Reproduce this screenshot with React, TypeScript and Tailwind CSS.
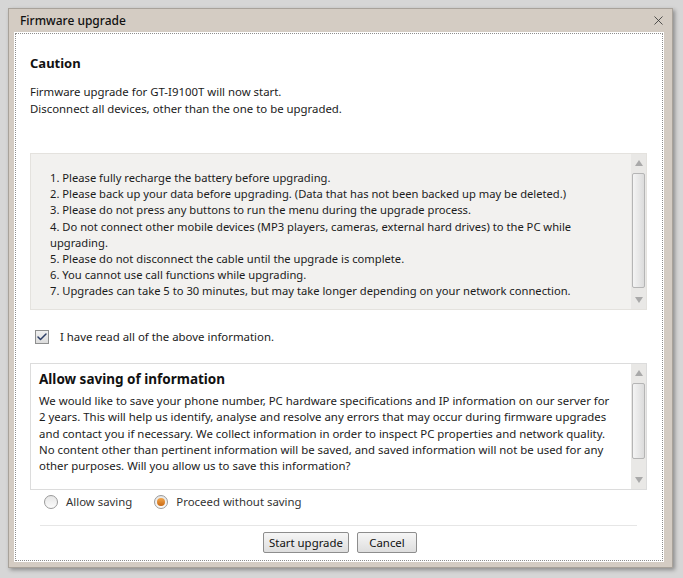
import { Check, X } from "lucide-react";

const font = { fontFamily: '"Noto Sans", "Open Sans", sans-serif' };

const rules = [
  "1. Please fully recharge the battery before upgrading.",
  "2. Please back up your data before upgrading. (Data that has not been backed up may be deleted.)",
  "3. Please do not press any buttons to run the menu during the upgrade process.",
  "4. Do not connect other mobile devices (MP3 players, cameras, external hard drives) to the PC while upgrading.",
  "5. Please do not disconnect the cable until the upgrade is complete.",
  "6. You cannot use call functions while upgrading.",
  "7. Upgrades can take 5 to 30 minutes, but may take longer depending on your network connection.",
];

function Scrollbar({ thumbTop, thumbHeight }: { thumbTop: number; thumbHeight: number }) {
  return (
    <div className="relative w-[15px] shrink-0 bg-[#e9e8e6]">
      <div className="absolute left-[4px] top-[6px] h-0 w-0 border-x-[4px] border-b-[6px] border-x-transparent border-b-[#a9a9a9]" />
      <div
        className="absolute left-[1px] w-[13px] rounded-[2px] border border-[#b5b5b5] bg-gradient-to-r from-[#f4f4f4] to-[#dcdcdc]"
        style={{ top: thumbTop, height: thumbHeight }}
      />
      <div className="absolute bottom-[6px] left-[4px] h-0 w-0 border-x-[4px] border-t-[6px] border-x-transparent border-t-[#a9a9a9]" />
    </div>
  );
}

function Radio({ checked, label }: { checked?: boolean; label: string }) {
  return (
    <label className="flex items-center gap-[8px]">
      <span className="flex h-[14px] w-[14px] items-center justify-center rounded-full border border-[#9a9a9a] bg-gradient-to-b from-[#e6e6e6] to-[#fbfbfb]">
        {checked && <span className="h-[8px] w-[8px] rounded-full bg-gradient-to-b from-[#f2a64a] to-[#c96a12]" />}
      </span>
      <span>{label}</span>
    </label>
  );
}

export default function App() {
  return (
    <div className="h-[578px] w-[683px] overflow-hidden bg-[#d6d6d6] pl-[8px] pt-[8px] text-[11.4px] text-[#1b1b1b]" style={font}>
      <div className="flex h-[560px] w-[665px] flex-col border border-[#a8a29a] bg-[#d4ccc3] shadow-[2px_2px_4px_rgba(0,0,0,0.35)]">
        <div className="flex h-[23px] shrink-0 items-center justify-between pl-[11px] pr-[6px]">
          <span className="text-[12px] font-medium text-[#111]">Firmware upgrade</span>
          <X size={15} strokeWidth={1.3} className="text-[#333]" />
        </div>
        <div className="mb-[5px] ml-[5px] mr-[8px] flex flex-1 bg-white p-[1px]">
          <div className="flex flex-1 flex-col border border-dotted border-[#8c8c8c] pl-[14px] pr-[15px] pt-[19px]">
            <div className="h-[20px] text-[13px] font-bold leading-[20px] text-[#111]">Caution</div>
            <div className="mt-[10px] leading-[17px]">
              <div>Firmware upgrade for GT-I9100T will now start.</div>
              <div>Disconnect all devices, other than the one to be upgraded.</div>
            </div>
            <div className="mt-[36px] flex h-[157px] border border-[#e4e2de] bg-[#f2f1ef]">
              <div className="flex-1 pl-[19px] pr-[10px] pt-[16px] text-[11.2px] leading-[16.2px]">
                {rules.map((r) => (
                  <div key={r}>{r}</div>
                ))}
              </div>
              <Scrollbar thumbTop={19} thumbHeight={115} />
            </div>
            <label className="mt-[20px] flex h-[14px] items-center gap-[11px] pl-[5px]">
              <span className="flex h-[14px] w-[14px] items-center justify-center border border-[#8e8f8f] bg-gradient-to-b from-[#f0f0f0] to-[#dcdcdc]">
                <Check size={12} strokeWidth={3} className="text-[#2c3e66]" />
              </span>
              <span>I have read all of the above information.</span>
            </label>
            <div className="mt-[19px] flex h-[127px] border border-[#dcdcdc] bg-white">
              <div className="flex-1 pl-[8px] pr-[20px] pt-[5px]">
                <div className="h-[20px] text-[13.5px] font-bold leading-[20px] text-[#111]">Allow saving of information</div>
                <div className="mt-[4px] leading-[16.3px]">
                  We would like to save your phone number, PC hardware specifications and IP information on our server for 2 years. This will help us identify, analyse and resolve any errors that may occur during firmware upgrades and contact you if necessary. We collect information in order to inspect PC properties and network quality. No content other than pertinent information will be saved, and saved information will not be used for any other purposes. Will you allow us to save this information?
                </div>
              </div>
              <Scrollbar thumbTop={19} thumbHeight={76} />
            </div>
            <div className="mt-[1px] flex h-[22px] items-center gap-[22px] pl-[14px] text-[#333]">
              <Radio label="Allow saving" />
              <Radio checked label="Proceed without saving" />
            </div>
            <div className="mx-[10px] mt-[12px] h-px bg-[#e6e6e6]" />
            <div className="mt-[6px] flex justify-center gap-[8px] pl-[3px]">
              <button className="h-[21px] w-[86px] rounded-[2px] border border-[#8d8d8d] bg-gradient-to-b from-[#f6f6f6] to-[#dedede] text-[11.4px] text-[#111]">
                Start upgrade
              </button>
              <button className="h-[21px] w-[60px] rounded-[2px] border border-[#8d8d8d] bg-gradient-to-b from-[#f6f6f6] to-[#dedede] text-[11.4px] text-[#111]">
                Cancel
              </button>
            </div>
          </div>
        </div>
      </div>
    </div>
  );
}
